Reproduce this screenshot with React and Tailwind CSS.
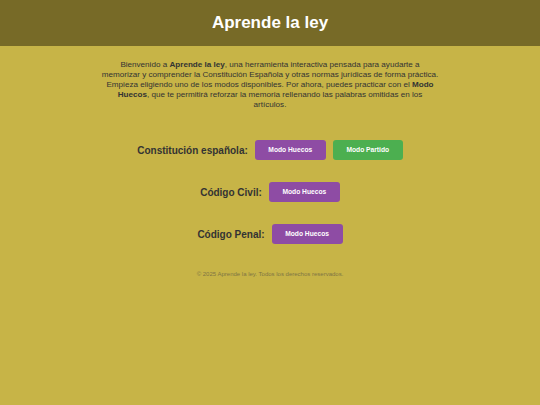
export default function App() {
  const font = { fontFamily: '"Liberation Sans", Arial, sans-serif' };
  const btnP = "w-[71px] h-[20px] rounded-[3px] bg-[#8e4ca4] text-white text-[6.7px] font-bold flex items-center justify-center";
  const btnG = "w-[70px] h-[20px] rounded-[3px] bg-[#4caf50] text-white text-[6.7px] font-bold flex items-center justify-center";
  const label = "text-[10px] font-bold text-[#333333]";
  return (
    <div className="w-[540px] h-[405px] bg-[#c7b447] flex flex-col" style={font}>
      <header className="h-[46px] bg-[#776a27] flex items-center justify-center">
        <h1 className="text-[17px] font-bold text-white">Aprende la ley</h1>
      </header>
      <div className="mt-[14px] mx-auto w-[339px] text-center text-[8.1px] leading-[10px] text-[#333333]">
        Bienvenido a <b>Aprende la ley</b>, una herramienta interactiva pensada para ayudarte a memorizar y comprender la Constitución Española y otras normas jurídicas de forma práctica. Empieza eligiendo uno de los modos disponibles. Por ahora, puedes practicar con el <b>Modo Huecos</b>, que te permitirá reforzar la memoria rellenando las palabras omitidas en los artículos.
      </div>
      <div className="mt-[30px] flex flex-col items-center gap-[22px]">
        <div className="flex items-center gap-[7px]">
          <span className={label}>Constitución española:</span>
          <div className={btnP}>Modo Huecos</div>
          <div className={btnG}>Modo Partido</div>
        </div>
        <div className="flex items-center gap-[7px]">
          <span className={label}>Código Civil:</span>
          <div className={btnP}>Modo Huecos</div>
        </div>
        <div className="flex items-center gap-[7px]">
          <span className={label}>Código Penal:</span>
          <div className={btnP}>Modo Huecos</div>
        </div>
      </div>
      <div className="mt-[26px] text-center text-[6px] text-[#7f7444]">
        © 2025 Aprende la ley. Todos los derechos reservados.
      </div>
    </div>
  );
}
